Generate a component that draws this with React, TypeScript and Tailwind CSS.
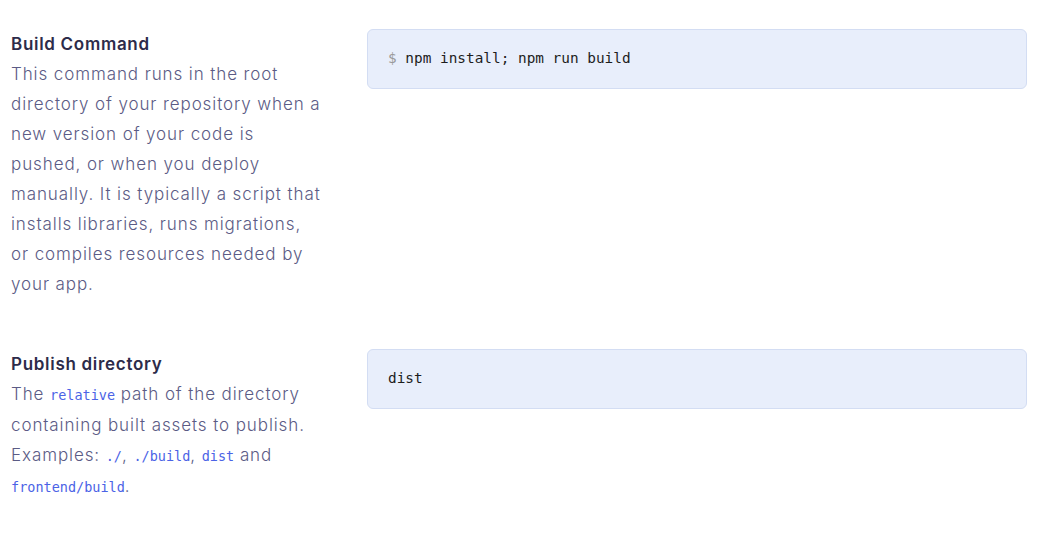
const sans = "font-['Inter','Noto_Sans',sans-serif]";
const mono = "font-['DejaVu_Sans_Mono','Liberation_Mono',monospace]";

function Code({ children }: { children: React.ReactNode }) {
  return <code className={`${mono} text-[13.5px] tracking-normal text-[#4b63e6]`}>{children}</code>;
}

function Setting({
  title,
  children,
  value,
}: {
  title: string;
  children: React.ReactNode;
  value: React.ReactNode;
}) {
  return (
    <div className="grid grid-cols-[314px_1fr] gap-[42px]">
      <div>
        <h3 className="text-[17px] font-semibold leading-[30px] tracking-[0.7px] text-[#2d2b4a]">
          {title}
        </h3>
        <p className="text-[17px] font-light leading-[30px] tracking-[0.9px] text-[#5b5b85]">
          {children}
        </p>
      </div>
      <div>
        <div
          className={`${mono} flex h-[60px] items-center rounded-md border border-[#d3ddf3] bg-[#e8eefb] px-5 text-[14.4px] text-[#1d1d1d]`}
        >
          {value}
        </div>
      </div>
    </div>
  );
}

export default function App() {
  return (
    <main className={`${sans} min-h-screen bg-white pl-[11px] pr-[28px] pt-[29px]`}>
      <div className="flex flex-col gap-[50px]">
        <Setting
          title="Build Command"
          value={
            <span>
              <span className="text-[#9a9a9a]">$</span> npm install; npm run build
            </span>
          }
        >
          This command runs in the root directory of your repository when a new version of your
          code is pushed, or when you deploy manually. It is typically a script that installs
          libraries, runs migrations, or{"\u00A0"}compiles resources needed by your app.
        </Setting>
        <Setting title="Publish directory" value="dist">
          The <Code>relative</Code> path of the directory containing built assets to publish.
          Examples: <Code>./</Code>, <Code>./build</Code>, <Code>dist</Code> and{" "}
          <Code>frontend/build</Code>.
        </Setting>
      </div>
    </main>
  );
}
